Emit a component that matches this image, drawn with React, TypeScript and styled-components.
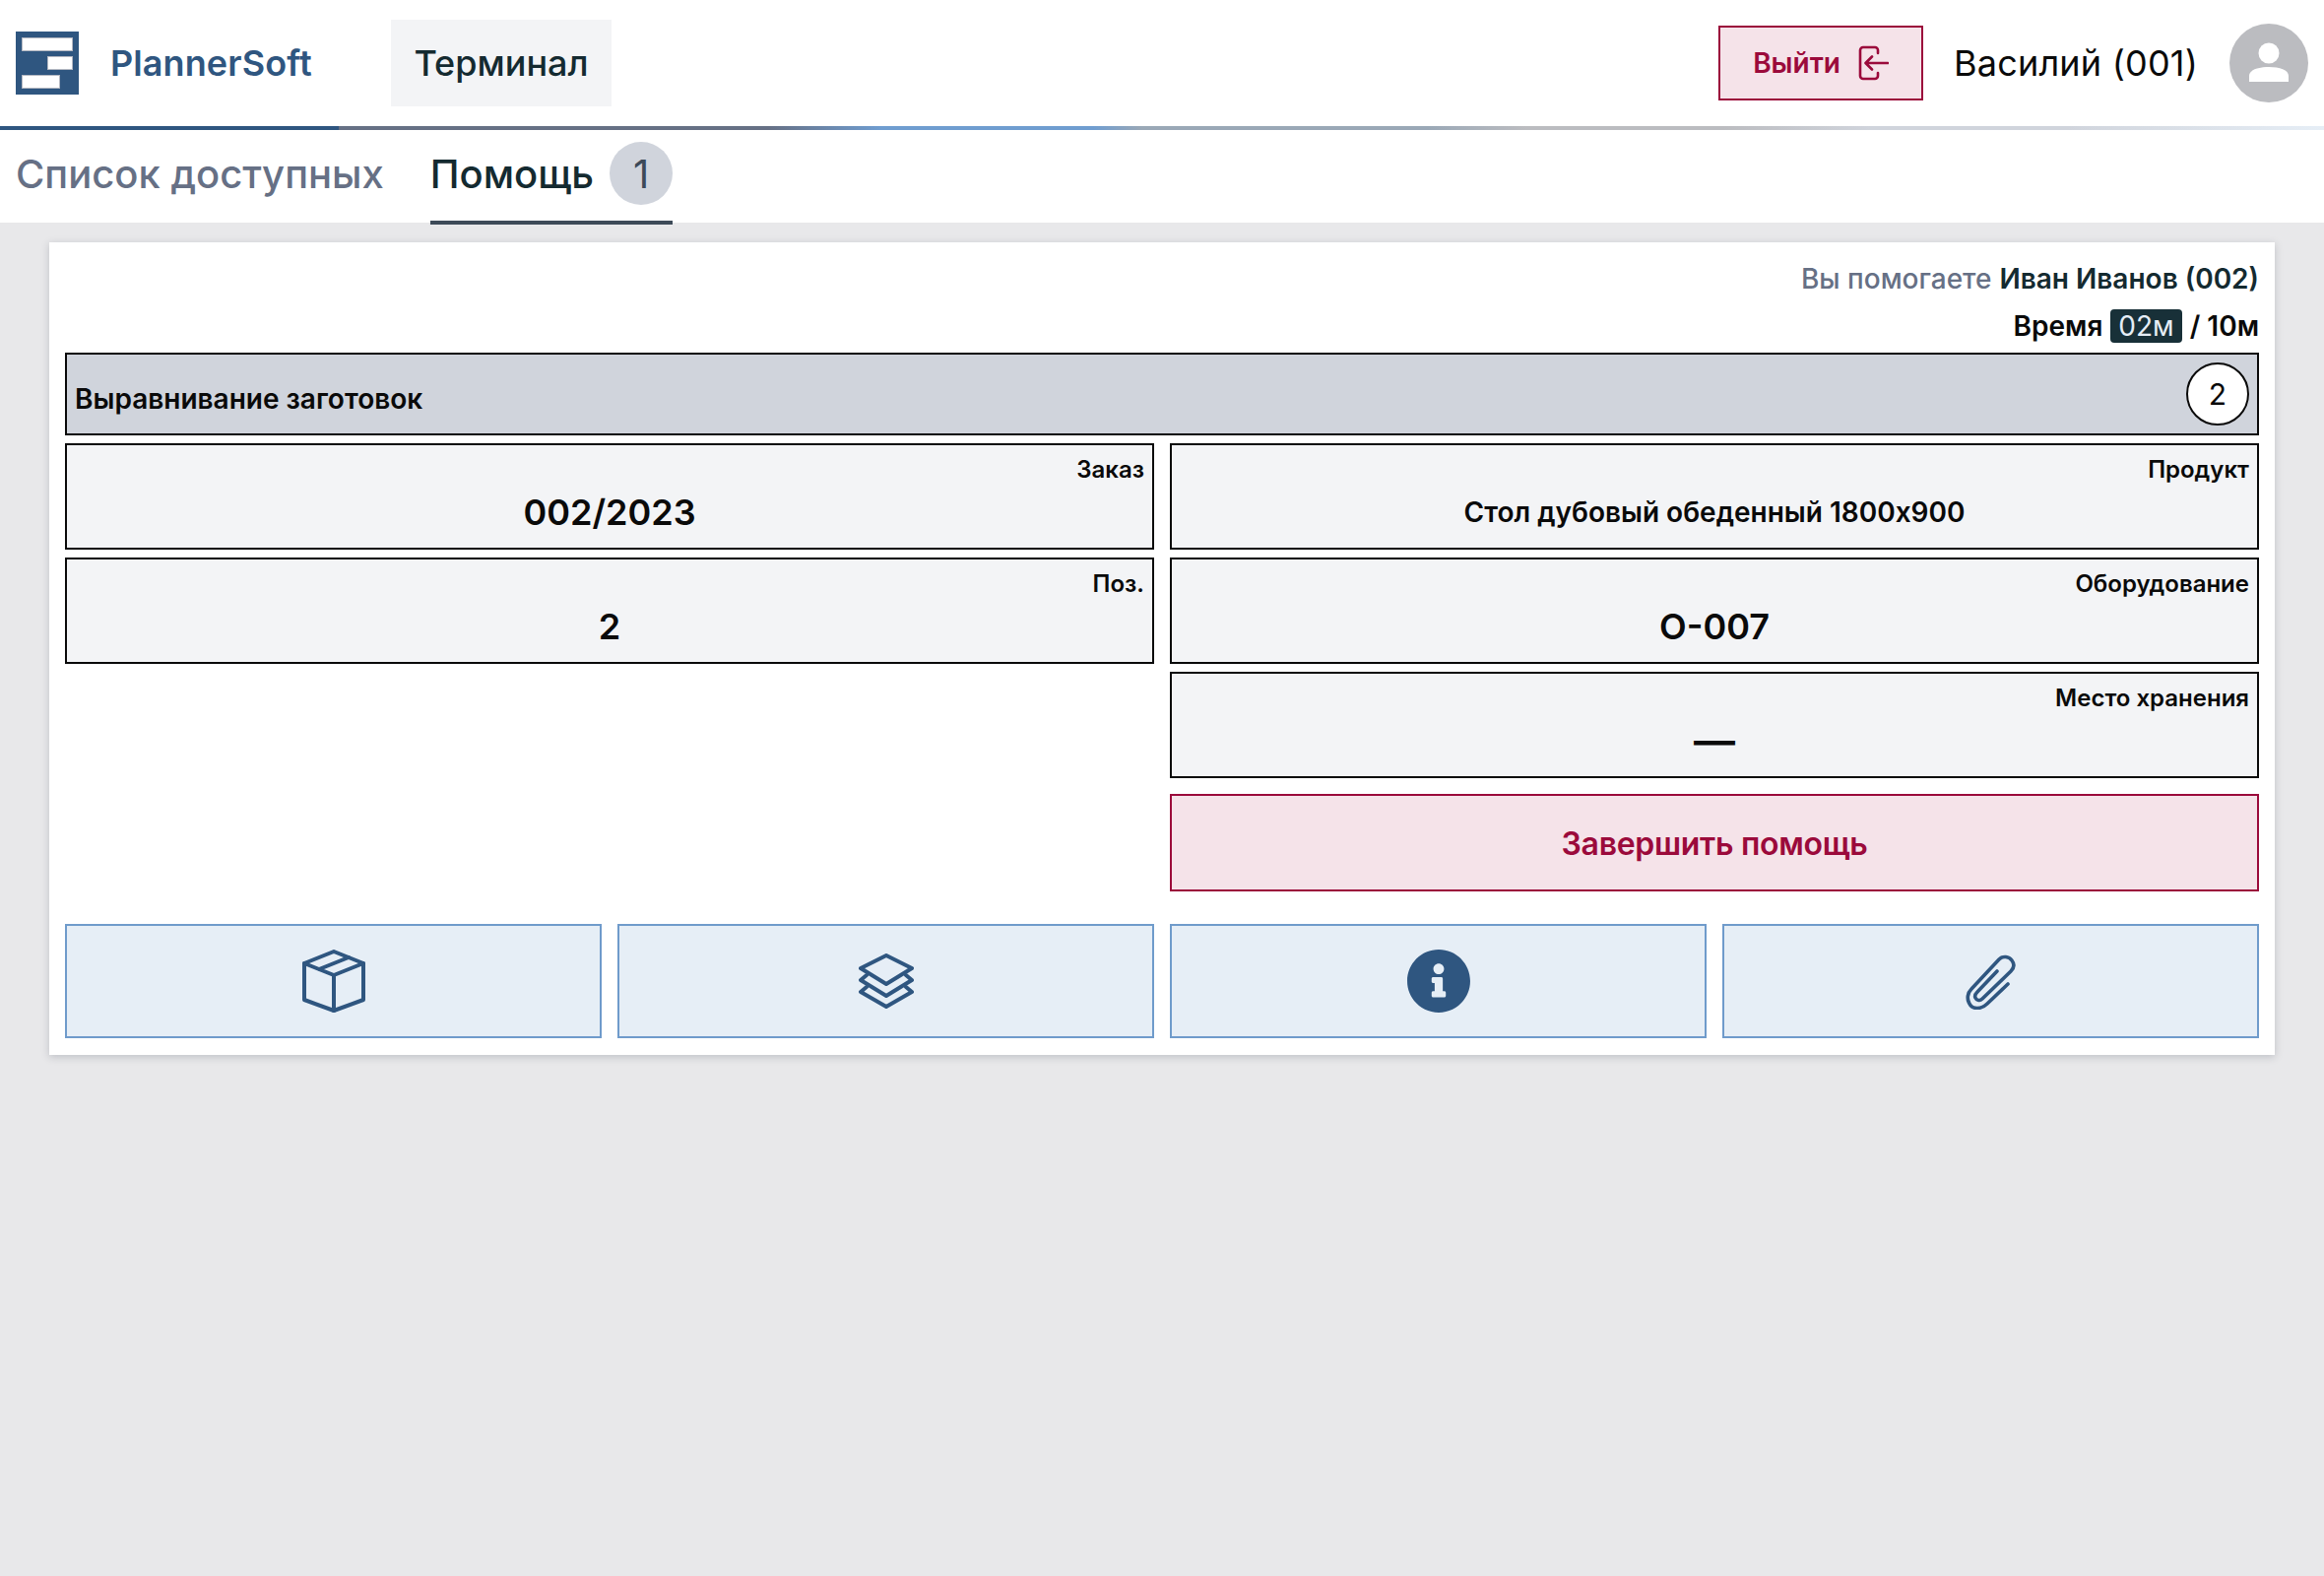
import styled, { createGlobalStyle } from 'styled-components';
import { FaInfoCircle } from 'react-icons/fa';

const PRIMARY = '#2f5680';
const DANGER = '#9b0a3b';
const INK = '#142a30';
const MUTED = '#667085';

const GlobalStyle = createGlobalStyle`
  html, body {
    margin: 0;
    padding: 0;
    background: #e8e8ea;
    font-family: Inter, "Liberation Sans", sans-serif;
    color: ${INK};
  }
  * { box-sizing: border-box; }
`;

const Page = styled.div`
  width: 2360px;
  height: 1600px;
  display: flex;
  flex-direction: column;
`;

const Header = styled.header`
  height: 128px;
  background: #fff;
  display: flex;
  align-items: center;
  padding: 0 16px;
`;

const Brand = styled.div`
  display: flex;
  align-items: center;
  gap: 32px;
  width: 381px;
  color: ${PRIMARY};
  font-size: 36px;
  font-weight: 600;
  letter-spacing: 0.1px;
`;

const Terminal = styled.div`
  width: 224px;
  height: 88px;
  display: flex;
  align-items: center;
  justify-content: center;
  background: #f3f4f6;
  font-size: 36px;
  font-weight: 500;
`;

const HeaderRight = styled.div`
  margin-left: auto;
  display: flex;
  align-items: center;
`;

const LogoutButton = styled.button`
  width: 208px;
  height: 76px;
  display: flex;
  align-items: center;
  justify-content: center;
  gap: 17px;
  padding: 0;
  background: #f5e3e9;
  border: 2px solid ${DANGER};
  color: ${DANGER};
  font: 600 28px Inter, sans-serif;
`;

const UserName = styled.span`
  margin: 0 32px 0 31px;
  font-size: 36px;
  letter-spacing: 0.2px;
  color: #0a0a0a;
`;

const Rule = styled.div`
  height: 4px;
  background: linear-gradient(
    90deg,
    ${PRIMARY} 0,
    ${PRIMARY} 344px,
    ${MUTED} 344px,
    ${MUTED} 780px,
    #6f9dd0 895px,
    #6f9dd0 1110px,
    #9aa8b6 1160px,
    #9aa8b6 1450px,
    #bbbcc0 1550px,
    #bbbcc0 1750px,
    #d0d4dc 1900px,
    #d0d4dc 2100px,
    #e6eef6 2360px
  );
`;

const Tabs = styled.nav`
  height: 94px;
  background: #fff;
  display: flex;
  padding-left: 16px;
  gap: 47px;
`;

const Tab = styled.div<{ $active?: boolean }>`
  display: flex;
  align-items: center;
  gap: 16px;
  height: 96px;
  padding-bottom: 4px;
  font-size: 40px;
  font-weight: 500;
  color: ${(p) => (p.$active ? INK : MUTED)};
  border-bottom: 4px solid ${(p) => (p.$active ? '#3d4a58' : 'transparent')};
`;

const Badge = styled.span`
  width: 64px;
  height: 64px;
  border-radius: 50%;
  display: flex;
  align-items: center;
  justify-content: center;
  background: #d0d4dc;
  color: #3d4a58;
  font-weight: 400;
`;

const Main = styled.main`
  flex: 1;
  padding: 20px 50px;
`;

const Card = styled.section`
  background: #fff;
  height: 825px;
  padding: 16px;
  display: flex;
  flex-direction: column;
  box-shadow: 0 2px 8px rgba(40, 50, 70, 0.22);
`;

const HelpLine = styled.div`
  height: 48px;
  padding-bottom: 6px;
  display: flex;
  align-items: center;
  justify-content: flex-end;
  gap: 8px;
  font-size: 28px;
  font-weight: 500;
  color: ${MUTED};
  b {
    font-weight: 600;
    color: ${INK};
  }
`;

const TimeLine = styled(HelpLine)`
  color: #0a0a0a;
  font-weight: 600;
`;

const TimeChip = styled.span`
  background: #183038;
  color: #e6eef6;
  font-weight: 400;
  border-radius: 4px;
  padding: 0 8px;
  line-height: 34px;
`;

const TitleBar = styled.div`
  height: 84px;
  border: 2px solid #0a0a0a;
  background: #d0d4dc;
  display: flex;
  align-items: center;
  justify-content: space-between;
  padding: 10px 8px 0 8px;
  font-size: 28px;
  font-weight: 600;
  color: #0a0a0a;
`;

const Step = styled.span`
  width: 64px;
  height: 64px;
  margin-top: -11px;
  border-radius: 50%;
  background: #fff;
  border: 2px solid #0a0a0a;
  display: flex;
  align-items: center;
  justify-content: center;
  font-weight: 400;
  font-size: 30px;
`;

const Columns = styled.div`
  margin-top: 8px;
  display: grid;
  grid-template-columns: 1fr 1fr;
  gap: 16px;
`;

const Column = styled.div`
  display: flex;
  flex-direction: column;
  gap: 8px;
`;

const Cell = styled.div`
  height: 108px;
  border: 2px solid #0a0a0a;
  background: #f3f4f6;
  display: flex;
  flex-direction: column;
  padding: 10px 8px 0;
  color: #0a0a0a;
`;

const CellLabel = styled.span`
  text-align: right;
  font-size: 24px;
  font-weight: 600;
  line-height: 29px;
`;

const CellValue = styled.span<{ $size?: number }>`
  text-align: center;
  font-size: ${(p) => p.$size ?? 36}px;
  font-weight: 600;
  line-height: 46px;
  margin-top: 6px;
`;

const FinishButton = styled.button`
  margin-top: 8px;
  height: 99px;
  padding-top: 3px;
  background: #f5e3e9;
  border: 2px solid ${DANGER};
  color: ${DANGER};
  font: 600 32px Inter, sans-serif;
  letter-spacing: -0.3px;
`;

const Actions = styled.div`
  margin-top: 33px;
  display: grid;
  grid-template-columns: repeat(4, 1fr);
  gap: 16px;
`;

const ActionButton = styled.button`
  height: 116px;
  display: flex;
  align-items: center;
  justify-content: center;
  background: #e6eef6;
  border: 2px solid #6f9bcb;
  color: ${PRIMARY};
  padding: 0;
`;

const ClipSvg = styled.svg`
  margin-right: 2px;
`;

function Logo() {
  return (
    <svg width="64" height="64" viewBox="0 0 64 64">
      <rect width="64" height="64" fill={PRIMARY} />
      <g fill="#fff" stroke="#b4b8c2" strokeWidth="1">
        <rect x="6.5" y="6.5" width="51" height="13" />
        <rect x="32.5" y="25.5" width="25" height="13" />
        <rect x="6.5" y="44.5" width="38" height="13" />
      </g>
    </svg>
  );
}

function LogoutIcon() {
  return (
    <svg width="32" height="36" viewBox="0 0 32 36" fill="none" stroke={DANGER} strokeWidth="2.6">
      <path d="M21 8V5a3 3 0 0 0-3-3H6a3 3 0 0 0-3 3v26a3 3 0 0 0 3 3h12a3 3 0 0 0 3-3v-3" strokeLinecap="round" />
      <path d="M31 18H9M15 11.5 8.5 18l6.5 6.5" strokeLinecap="round" strokeLinejoin="round" />
    </svg>
  );
}

function Avatar() {
  return (
    <svg width="80" height="80" viewBox="0 0 80 80">
      <circle cx="40" cy="40" r="40" fill="#bbbcc0" />
      <circle cx="40" cy="30" r="10.5" fill="#fff" />
      <path d="M20 59v-6c0-6 9-9 20-9s20 3 20 9v6z" fill="#fff" />
    </svg>
  );
}

function BoxIcon() {
  return (
    <svg width="64" height="64" viewBox="0 0 64 64" fill="none" stroke="currentColor" strokeWidth="4" strokeLinejoin="round" strokeLinecap="round">
      <path d="M32 2 62 14v37L32 62 2 51V14z" />
      <path d="M2 14l30 12 30-12M32 26v36M17 20 47 8" />
    </svg>
  );
}

function StackIcon() {
  return (
    <svg width="56" height="56" viewBox="0 0 56 56" fill="none" stroke="currentColor" strokeWidth="4" strokeLinejoin="round" strokeLinecap="round">
      <path d="M28 2 54 15 28 31 2 15z" />
      <path d="M8 22 2 27l26 16 26-16-6-5" />
      <path d="M8 34 2 39l26 15 26-15-6-5" />
    </svg>
  );
}

function ClipIcon() {
  return (
    <ClipSvg width="52" height="57" viewBox="20 17 52 57" fill="none" stroke="currentColor" strokeWidth="3.6" strokeLinecap="round" strokeLinejoin="round">
      <path d="M64 48 43 68C37 74 28 74 25 68 22 63 23 57 27 53L55 23C59 19 65 20 68 24 71 28 70 32 67 35L38 63C35 66 32 64 31 62 30 60 31 58 33 56L53 35" />
    </ClipSvg>
  );
}

export default function App() {
  return (
    <Page>
      <GlobalStyle />
      <Header>
        <Brand>
          <Logo />
          PlannerSoft
        </Brand>
        <Terminal>Терминал</Terminal>
        <HeaderRight>
          <LogoutButton>
            Выйти
            <LogoutIcon />
          </LogoutButton>
          <UserName>Василий (001)</UserName>
          <Avatar />
        </HeaderRight>
      </Header>
      <Rule />
      <Tabs>
        <Tab>Список доступных</Tab>
        <Tab $active>
          Помощь
          <Badge>1</Badge>
        </Tab>
      </Tabs>
      <Main>
        <Card>
          <HelpLine>
            Вы помогаете <b>Иван Иванов (002)</b>
          </HelpLine>
          <TimeLine>
            Время <TimeChip>02м</TimeChip> / 10м
          </TimeLine>
          <TitleBar>
            Выравнивание заготовок
            <Step>2</Step>
          </TitleBar>
          <Columns>
            <Column>
              <Cell>
                <CellLabel>Заказ</CellLabel>
                <CellValue>002/2023</CellValue>
              </Cell>
              <Cell>
                <CellLabel>Поз.</CellLabel>
                <CellValue>2</CellValue>
              </Cell>
            </Column>
            <Column>
              <Cell>
                <CellLabel>Продукт</CellLabel>
                <CellValue $size={28}>Стол дубовый обеденный 1800x900</CellValue>
              </Cell>
              <Cell>
                <CellLabel>Оборудование</CellLabel>
                <CellValue>О-007</CellValue>
              </Cell>
              <Cell>
                <CellLabel>Место хранения</CellLabel>
                <CellValue $size={42}>—</CellValue>
              </Cell>
              <FinishButton>Завершить помощь</FinishButton>
            </Column>
          </Columns>
          <Actions>
            <ActionButton aria-label="Упаковка">
              <BoxIcon />
            </ActionButton>
            <ActionButton aria-label="Материалы">
              <StackIcon />
            </ActionButton>
            <ActionButton aria-label="Информация">
              <FaInfoCircle size={66} />
            </ActionButton>
            <ActionButton aria-label="Файлы">
              <ClipIcon />
            </ActionButton>
          </Actions>
        </Card>
      </Main>
    </Page>
  );
}
